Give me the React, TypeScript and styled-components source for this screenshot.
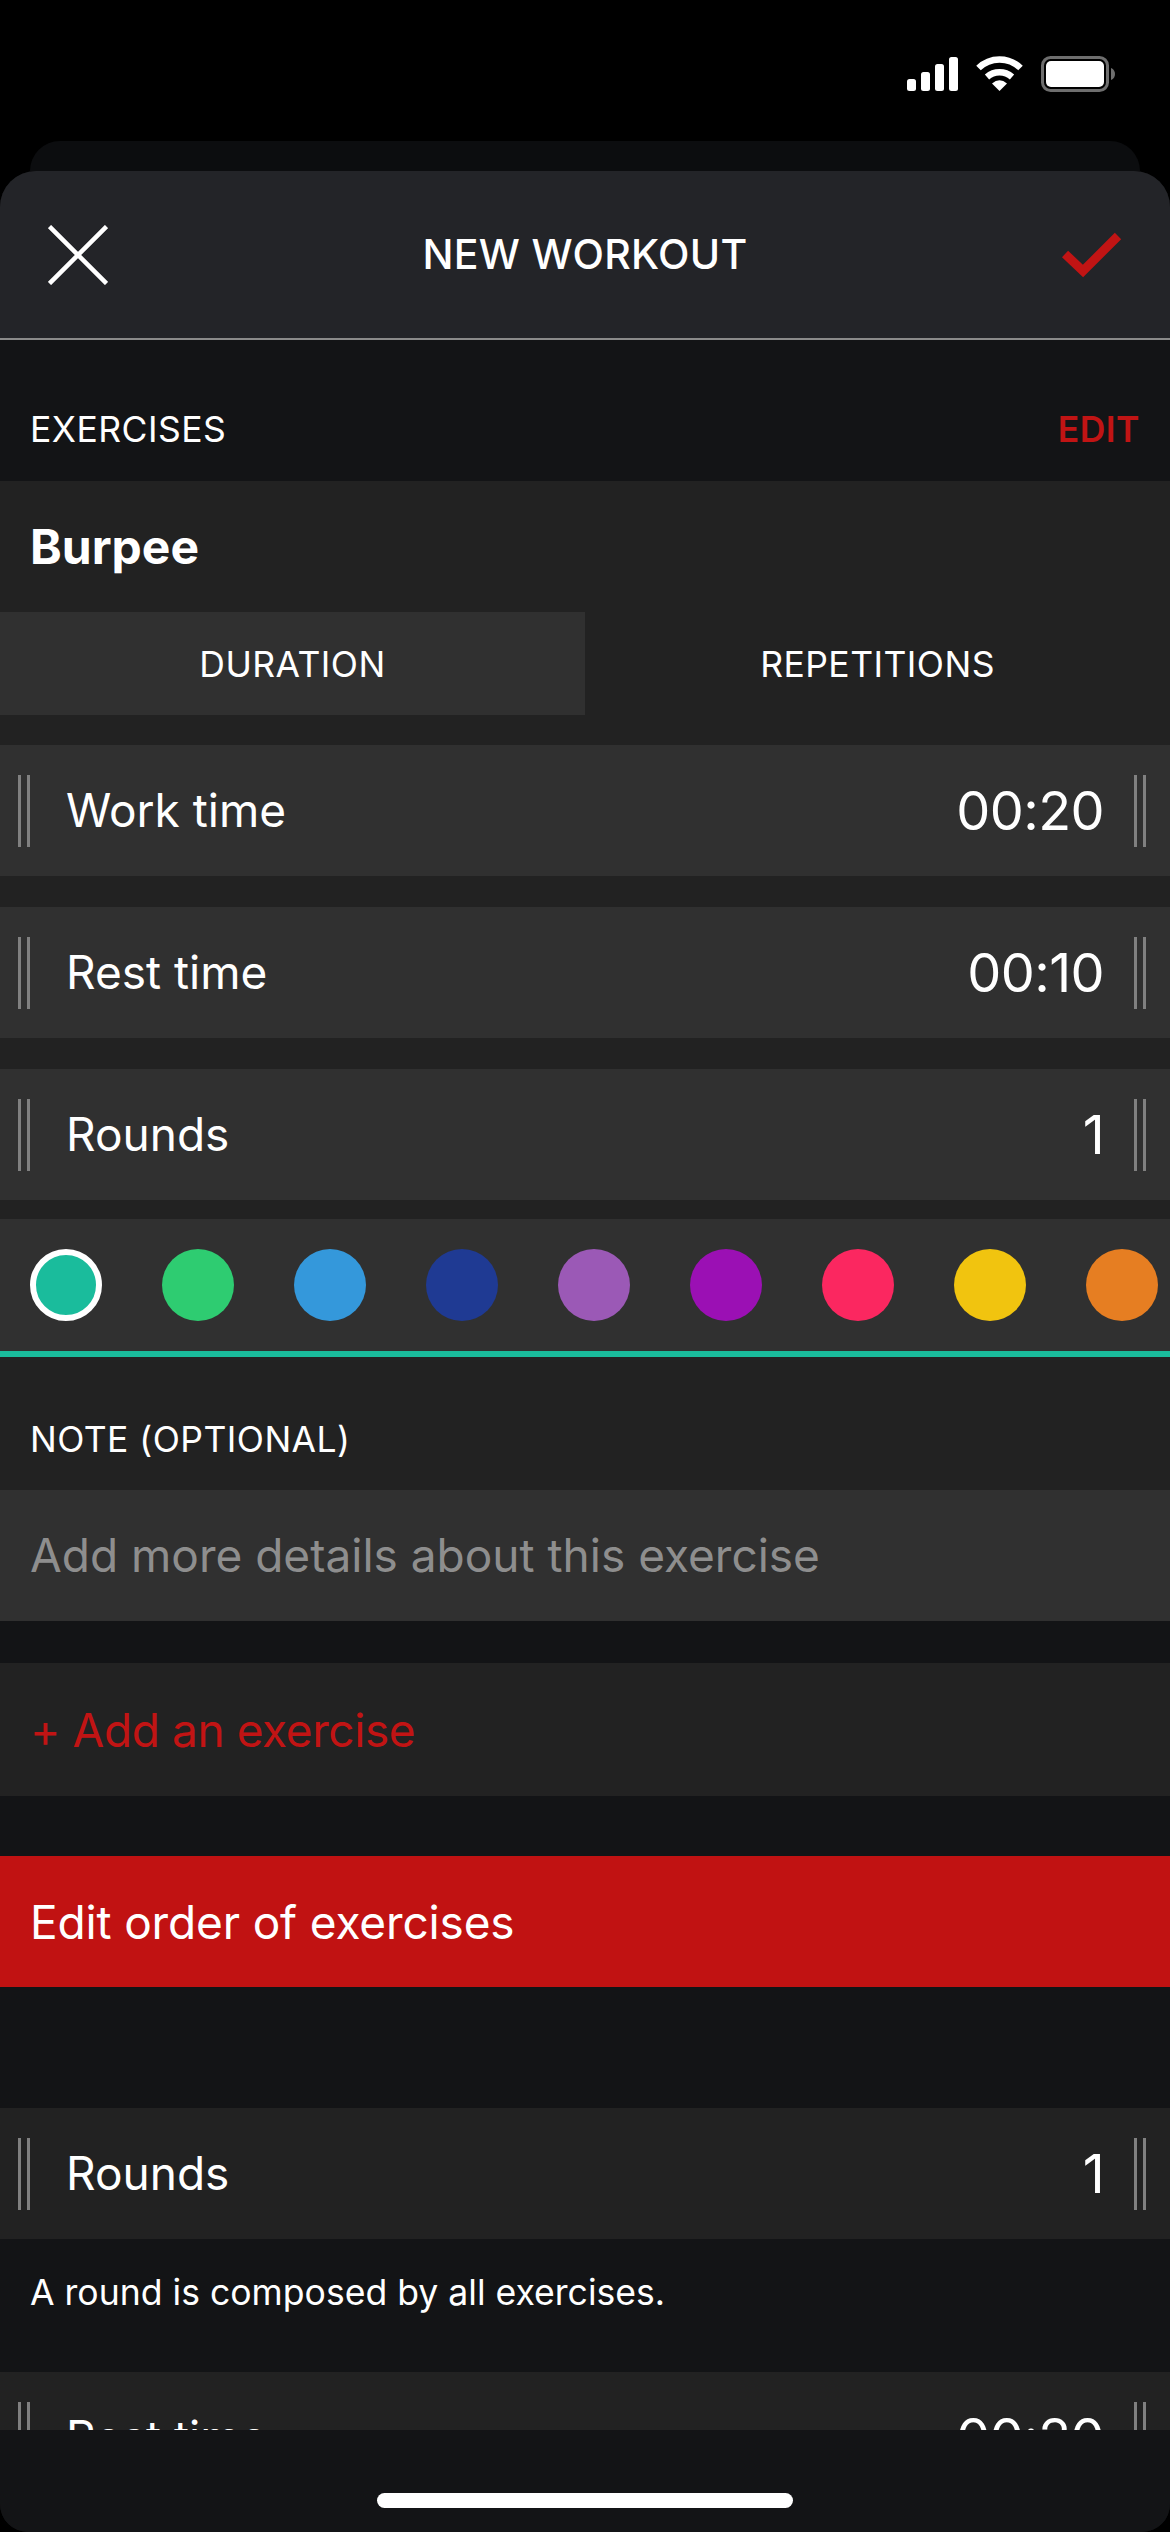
import React from "react";
import styled, { createGlobalStyle } from "styled-components";

const Global = createGlobalStyle`
  html, body { margin: 0; padding: 0; background: #000; }
  * { box-sizing: border-box; }
`;

const Page = styled.div`
  width: 1170px;
  height: 2532px;
  background: #000;
  display: flex;
  flex-direction: column;
  overflow: hidden;
  font-family: Inter, "Liberation Sans", sans-serif;
  color: #fff;
`;

const StatusBar = styled.div`
  height: 141px;
  flex: none;
  display: flex;
  justify-content: flex-end;
  align-items: flex-start;
  padding: 55px 55px 0 0;
`;

const BackCard = styled.div`
  height: 30px;
  flex: none;
  margin: 0 30px;
  background: #0c0d0f;
  border-radius: 30px 30px 0 0;
`;

const Sheet = styled.div`
  flex: 1;
  min-height: 0;
  display: flex;
  flex-direction: column;
  background: #131416;
  border-radius: 36px 36px 28px 28px;
  overflow: hidden;
`;

const Header = styled.header`
  height: 169px;
  flex: none;
  background: #232428;
  border-bottom: 2px solid #8a8a8a;
  display: flex;
  align-items: center;
  justify-content: space-between;
  padding: 0 48px;
`;

const Title = styled.h1`
  margin: 0 0 2px;
  font-size: 41px;
  font-weight: 500;
  letter-spacing: 0.3px;
  color: #fff;
`;

const Scroll = styled.div`
  flex: 1;
  min-height: 0;
  overflow: hidden;
`;

const SectionHead = styled.div`
  height: 141px;
  padding: 38px 30px 0;
  display: flex;
  align-items: center;
  justify-content: space-between;
  font-size: 35.5px;
  letter-spacing: 0.45px;
`;

const EditLink = styled.span`
  color: #c11414;
  font-weight: 600;
`;

const Card = styled.section`
  background: #222222;
`;

const ExerciseName = styled.div`
  height: 131px;
  padding: 0 30px;
  display: flex;
  align-items: center;
  font-size: 48px;
  font-weight: 700;
`;

const Tabs = styled.div`
  height: 103px;
  display: grid;
  grid-template-columns: 585px 1fr;
  margin-bottom: 30px;
`;

const Tab = styled.div<{ $active?: boolean }>`
  display: flex;
  align-items: center;
  justify-content: center;
  padding-top: 2px;
  font-size: 35.5px;
  letter-spacing: 0.45px;
  background: ${(p) => (p.$active ? "#303030" : "transparent")};
`;

const Rows = styled.div`
  display: flex;
  flex-direction: column;
  gap: 31px;
  margin-bottom: 19px;
`;

const Row = styled.div<{ $plain?: boolean }>`
  height: 131px;
  display: flex;
  align-items: center;
  padding: 0 24px 0 18px;
  background: ${(p) => (p.$plain ? "#222222" : "#303030")};
`;

const Handle = styled.span`
  width: 12px;
  height: 72px;
  flex: none;
  border-left: 3px solid #808080;
  border-right: 3px solid #808080;
`;

const RowLabel = styled.span`
  flex: 1;
  margin-left: 36px;
  padding-bottom: 2px;
  font-size: 46px;
  font-weight: 400;
`;

const RowValue = styled.span`
  margin-right: 30px;
  font-size: 54px;
  font-weight: 380;
  letter-spacing: -0.6px;
`;

const Colors = styled.div`
  height: 138px;
  padding-left: 30px;
  display: flex;
  align-items: center;
  gap: 60px;
  background: #303030;
  border-bottom: 6px solid #1abc9c;
`;

const Swatch = styled.span<{ $color: string; $selected?: boolean }>`
  width: 72px;
  height: 72px;
  flex: none;
  border-radius: 50%;
  background: ${(p) => p.$color};
  border: ${(p) => (p.$selected ? "6px solid #fff" : "none")};
`;

const NoteHead = styled.div`
  height: 133px;
  padding: 32px 30px 0;
  display: flex;
  align-items: center;
  font-size: 35.5px;
  letter-spacing: 0.45px;
`;

const NoteField = styled.div`
  height: 131px;
  padding: 0 30px 2px;
  display: flex;
  align-items: center;
  background: #303030;
  color: #8e8e8e;
  font-size: 46px;
`;

const AddRow = styled.div`
  height: 133px;
  margin-top: 42px;
  padding: 0 30px;
  display: flex;
  align-items: center;
  background: #222222;
  color: #c11414;
  font-size: 46px;
  letter-spacing: -0.4px;
`;

const OrderButton = styled.div`
  height: 131px;
  margin: 60px 0 121px;
  padding: 0 30px;
  display: flex;
  align-items: center;
  background: #c11212;
  color: #fff;
  font-size: 46px;
  letter-spacing: -0.15px;
`;

const Hint = styled.div`
  height: 133px;
  padding: 0 30px 26px;
  display: flex;
  align-items: center;
  font-size: 35.6px;
`;

const BottomBar = styled.div`
  height: 102px;
  flex: none;
  display: flex;
  justify-content: center;
  padding-top: 63px;
  background: #131416;
`;

const HomeIndicator = styled.span`
  width: 416px;
  height: 15px;
  border-radius: 8px;
  background: #fff;
`;

const StatusIcons = () => (
  <svg width="208" height="38" viewBox="0 0 208 38" fill="none">
    <rect x="0" y="24" width="9" height="12" rx="2.5" fill="#fff" />
    <rect x="14" y="17" width="9" height="19" rx="2.5" fill="#fff" />
    <rect x="28" y="9" width="9" height="27" rx="2.5" fill="#fff" />
    <rect x="42" y="2" width="9" height="34" rx="2.5" fill="#fff" />
    <path d="M71.5 13 A 30 30 0 0 1 113.5 13" stroke="#fff" strokeWidth="6.5" />
    <path d="M80 22 A 19 19 0 0 1 105 22" stroke="#fff" strokeWidth="6.5" />
    <path d="M92.5 36 L85 28.5 Q92.5 22 100 28.5 Z" fill="#fff" />
    <rect x="135.5" y="2.5" width="65" height="33" rx="8" stroke="#6e6e6e" strokeWidth="3" />
    <rect x="139" y="6" width="58" height="26" rx="5" fill="#fff" />
    <path d="M204 13 C207 14 208 17 208 19 C208 21 207 24 204 25 Z" fill="#6e6e6e" />
  </svg>
);

const CloseIcon = () => (
  <svg width="60" height="60" viewBox="0 0 60 60" fill="none">
    <path d="M1.5 1.5 L58.5 58.5 M58.5 1.5 L1.5 58.5" stroke="#fff" strokeWidth="4.5" />
  </svg>
);

const CheckIcon = () => (
  <svg width="60" height="46" viewBox="0 0 60 46" fill="none">
    <path d="M3 22 L21 39 L56 4" stroke="#c11414" strokeWidth="9" />
  </svg>
);

const SettingRow = ({ label, value, plain }: { label: string; value: string; plain?: boolean }) => (
  <Row $plain={plain}>
    <Handle />
    <RowLabel>{label}</RowLabel>
    <RowValue>{value}</RowValue>
    <Handle />
  </Row>
);

const palette = ["#1abc9c", "#2ecc71", "#3498db", "#1f3a93", "#9b59b6", "#9b10b4", "#fb2760", "#f1c40f", "#e67e22"];

export default function App() {
  return (
    <Page>
      <Global />
      <StatusBar>
        <StatusIcons />
      </StatusBar>
      <BackCard />
      <Sheet>
        <Header>
          <CloseIcon />
          <Title>NEW WORKOUT</Title>
          <CheckIcon />
        </Header>
        <Scroll>
          <SectionHead>
            <span>EXERCISES</span>
            <EditLink>EDIT</EditLink>
          </SectionHead>
          <Card>
            <ExerciseName>Burpee</ExerciseName>
            <Tabs>
              <Tab $active>DURATION</Tab>
              <Tab>REPETITIONS</Tab>
            </Tabs>
            <Rows>
              <SettingRow label="Work time" value="00:20" />
              <SettingRow label="Rest time" value="00:10" />
              <SettingRow label="Rounds" value="1" />
            </Rows>
            <Colors>
              {palette.map((c, i) => (
                <Swatch key={c} $color={c} $selected={i === 0} />
              ))}
            </Colors>
            <NoteHead>NOTE (OPTIONAL)</NoteHead>
            <NoteField>Add more details about this exercise</NoteField>
          </Card>
          <AddRow>+ Add an exercise</AddRow>
          <OrderButton>Edit order of exercises</OrderButton>
          <SettingRow plain label="Rounds" value="1" />
          <Hint>A round is composed by all exercises.</Hint>
          <SettingRow plain label="Rest time" value="00:20" />
        </Scroll>
        <BottomBar>
          <HomeIndicator />
        </BottomBar>
      </Sheet>
    </Page>
  );
}
